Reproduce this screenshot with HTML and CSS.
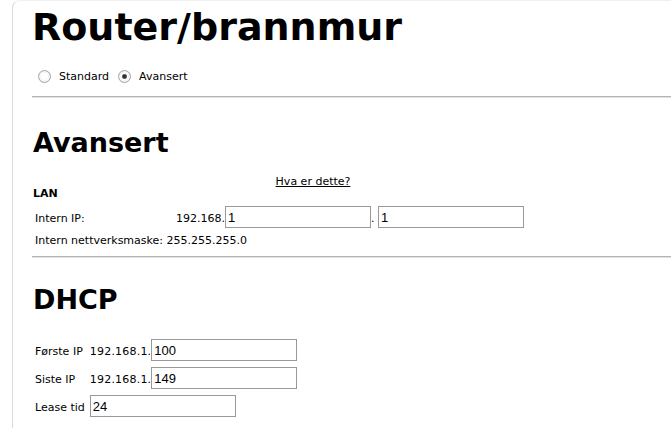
FILE: index.html
```html
<!DOCTYPE html>
<html lang="no">
<head>
  <meta charset="UTF-8" />
  <title>Router/brannmur</title>
  <link rel="stylesheet" href="styles.css">
</head>
<body>
  <div class="panel">
    <h1>Router/brannmur</h1>

    <div class="mode">
      <label><input type="radio" name="mode" value="standard"> Standard</label>
      <label><input type="radio" name="mode" value="avansert" checked> Avansert</label>
    </div>

    <hr>

    <h2>Avansert</h2>
    <div class="help"><a href="#">Hva er dette?</a></div>
    <div class="group-title">LAN</div>
    <table class="lan">
      <tr class="ip-row">
        <td class="lbl">Intern IP:</td>
        <td>192.168.<input type="text" value="1">. <input type="text" value="1"></td>
      </tr>
      <tr>
        <td colspan="2">Intern nettverksmaske: 255.255.255.0</td>
      </tr>
    </table>

    <hr class="sep">

    <h2 class="dhcp-title">DHCP</h2>
    <table class="dhcp">
      <tr>
        <td class="lbl">Første IP</td>
        <td>192.168.1.<input type="text" value="100"></td>
      </tr>
      <tr>
        <td class="lbl">Siste IP</td>
        <td>192.168.1.<input type="text" value="149"></td>
      </tr>
      <tr>
        <td class="lbl">Lease tid</td>
        <td><input type="text" value="24"></td>
      </tr>
    </table>
  </div>
</body>
</html>
```

FILE: styles.css
```css
body {
  margin: 0;
  font-family: Verdana, "DejaVu Sans", sans-serif;
  font-size: 11px;
  color: #000;
  background: #fff;
}

.panel {
  margin-left: 12px;
  padding: 0 0 8px 19px;
  border-left: 1px solid #d9d9d9;
  border-top: 1px solid #f0f0f0;
  border-top-left-radius: 8px;
}

h1 {
  font-size: 38px;
  font-weight: bold;
  line-height: 46px;
  margin: 3px 0 0 0;
}

h2 {
  font-size: 27px;
  font-weight: bold;
  line-height: 32px;
  margin: 29px 0 0 1px;
}

.mode {
  margin: 18px 0 0 6px;
  height: 16px;
  display: flex;
  align-items: center;
  gap: 9px;
}

.mode label {
  display: flex;
  align-items: center;
  gap: 8px;
}

.mode input {
  appearance: none;
  -webkit-appearance: none;
  margin: 0;
  width: 13px;
  height: 13px;
  border: 1px solid #a4a4a4;
  border-radius: 50%;
  background: radial-gradient(circle, #fff 0 3px, #ececec 6px);
}

.mode input:checked {
  background: radial-gradient(circle, #333 0 1.6px, #8a8a8a 2.4px, #fff 3px, #ececec 6px);
}

hr {
  height: 0;
  border: 0;
  border-top: 1px solid #b4b4b4;
  border-bottom: 1px solid #e2e2e2;
  margin: 12px 0 0 0;
}

hr.sep {
  margin-top: 7px;
}

.help {
  text-align: center;
  width: 562px;
  margin-top: 17px;
  line-height: 12px;
}

.help a {
  color: #000;
}

.group-title {
  font-weight: bold;
  line-height: 12px;
  margin-left: 1px;
}

table {
  border-collapse: collapse;
}

td {
  padding: 2px 3px;
  line-height: 13px;
  vertical-align: baseline;
}

.lan {
  margin-top: 4px;
}

.lan .lbl {
  width: 135px;
}

.ip-row td {
  padding-bottom: 4px;
}

input[type="text"] {
  font-family: "Liberation Sans", Arial, sans-serif;
  font-size: 13px;
  color: #000;
  box-sizing: border-box;
  width: 146px;
  height: 22px;
  margin: 0;
  padding: 1px 2px;
  border: 1px solid #999;
}

.dhcp-title {
  margin-top: 26px;
}

.dhcp {
  margin-top: 20px;
}

.dhcp td {
  padding: 3px 0 3px 2px;
  letter-spacing: 0.2px;
}

.dhcp .lbl {
  padding: 3px 3px 3px 3px;
  letter-spacing: 0;
}
```
